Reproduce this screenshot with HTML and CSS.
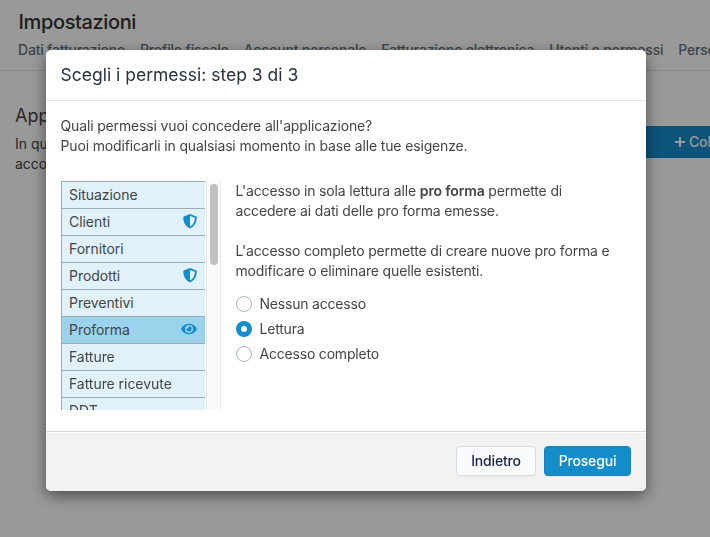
FILE: index.html
```html
<!DOCTYPE html>
<html lang="it">
<head>
<meta charset="utf-8">
<title>Impostazioni</title>
<link rel="stylesheet" href="styles.css">
</head>
<body>
<div class="page">
  <header class="page-header">
    <h1>Impostazioni</h1>
    <nav class="tabs"><a>Dati fatturazione</a><a>Profilo fiscale</a><a>Account personale</a><a>Fatturazione elettronica</a><a>Utenti e permessi</a><a>Perso</a></nav>
  </header>
  <main class="content">
    <section class="intro">
      <h2>Applicazioni collegate</h2>
      <p>In questa pagina<br>account</p>
    </section>
    <button class="connect"><svg viewBox="0 0 10 10" width="10" height="10"><path d="M5 0v10M0 5h10"/></svg>Col</button>
  </main>
</div>
<div class="backdrop">
  <div class="modal" role="dialog">
    <div class="modal-header">Scegli i permessi: step 3 di 3</div>
    <div class="modal-body">
      <p class="lead">Quali permessi vuoi concedere all'applicazione?<br>Puoi modificarli in qualsiasi momento in base alle tue esigenze.</p>
      <div class="columns">
        <div class="scroller">
          <ul class="list">
            <li>Situazione</li>
            <li>Clienti <svg class="shield" viewBox="0 0 14 15"><path class="fill" d="M7 0 1.2 2.2Q.3 2.6.3 3.6C.3 8.800 2.700 12.800 7 14.400 11.300 12.800 13.700 8.800 13.700 3.600Q13.700 2.600 12.800 2.200Z"/><path class="cut" d="M7 1.900 11.900 3.800C11.800 7.900 10.300 11 7 12.500Z"/></svg></li>
            <li>Fornitori</li>
            <li>Prodotti <svg class="shield" viewBox="0 0 14 15"><path class="fill" d="M7 0 1.2 2.2Q.3 2.6.3 3.6C.3 8.800 2.700 12.800 7 14.400 11.300 12.800 13.700 8.800 13.700 3.600Q13.700 2.600 12.800 2.200Z"/><path class="cut" d="M7 1.900 11.900 3.800C11.800 7.900 10.300 11 7 12.500Z"/></svg></li>
            <li>Preventivi</li>
            <li class="active">Proforma <svg class="eye" viewBox="0 0 576 512"><path class="fill" d="M572.52 241.400C518.290 135.590 410.930 64 288 64S57.680 135.640 3.480 241.410a32.350 32.350 0 0 0 0 29.190C57.710 376.410 165.070 448 288 448s230.320-71.640 284.520-177.410a32.350 32.350 0 0 0 0-29.190zM288 400a144 144 0 1 1 144-144 143.930 143.930 0 0 1-144 144zm0-240a95.310 95.310 0 0 0-25.310 3.790 47.850 47.850 0 0 1-66.900 66.900A95.780 95.780 0 1 0 288 160z"/></svg></li>
            <li>Fatture</li>
            <li>Fatture ricevute</li>
            <li>DDT</li>
          </ul>
          <div class="track"><div class="thumb"></div></div>
        </div>
        <div class="details">
          <p>L'accesso in sola lettura alle <b>pro forma</b> permette di<br>accedere ai dati delle pro forma emesse.</p>
          <p>L'accesso completo permette di creare nuove pro forma e<br>modificare o eliminare quelle esistenti.</p>
          <div class="options">
            <label><span class="radio"></span>Nessun accesso</label>
            <label><span class="radio checked"></span>Lettura</label>
            <label><span class="radio"></span>Accesso completo</label>
          </div>
        </div>
      </div>
    </div>
    <div class="modal-footer">
      <button class="btn">Indietro</button>
      <button class="btn primary">Prosegui</button>
    </div>
  </div>
</div>
</body>
</html>
```
FILE: styles.css
```css
* { box-sizing: border-box; }
html, body { height: 100%; overflow: hidden; }
body { margin: 0; background: #fff; color: #444; font: 14px/20px Inter, sans-serif; }
h1, h2, p, ul { margin: 0; padding: 0; }
button { font: inherit; }

.page { height: 537px; overflow: hidden; }
.page-header { height: 71px; padding: 10px 0 0 18px; border-bottom: 1px solid #e4e4e4; }
h1 { padding-left: 0.500px; font-size: 20px; line-height: 24px; font-weight: 500; letter-spacing: -0.38px; color: #333; }
.tabs { display: flex; gap: 15px; margin-top: 6px; overflow: hidden; font-weight: 500; letter-spacing: -0.2px; color: #65747b; white-space: nowrap; }
.content { display: flex; justify-content: space-between; padding: 34px 0 0 15px; }
h2 { font-size: 18px; line-height: 22px; font-weight: 400; margin-bottom: 7px; }
.connect { display: flex; align-items: center; gap: 4px; width: 85px; height: 32px; margin-top: 21px; padding: 0 0 0 50px; border: 0; background: #168dcb; color: #fff; font-weight: 500; letter-spacing: -0.15px; }
.connect svg { stroke: #fff; stroke-width: 2; flex: none; }

.backdrop { position: fixed; inset: 0; padding: 50px 46px; background: rgba(0, 0, 0, .4); }
.modal { display: flex; flex-direction: column; width: 600px; height: 441px; overflow: hidden; background: #fff; border-radius: 5px; box-shadow: 0 5px 15px rgba(0, 0, 0, .5); }
.modal-header { height: 51px; padding: 13px 14.500px; border-bottom: 1px solid #e5e5e5; font-size: 17.500px; line-height: 24px; color: #273142; }
.modal-body { flex: 1; padding: 15px 15px 0 14.500px; letter-spacing: -0.15px; }
.columns { display: flex; gap: 15px; margin-top: 25px; }
.scroller { display: flex; width: 160px; height: 229px; overflow: hidden; }
.list { list-style: none; width: 144.500px; margin-right: 1px; border-left: 1px solid #9eabb2; letter-spacing: -0.05px; }
.list li { display: flex; align-items: center; justify-content: space-between; height: 27px; padding: 0 8px 1px 7.500px; border-top: 1px solid #9eabb2; background: #e0f1fa; }
.list .active { background: #9bd3ed; }
.fill { fill: #168dcb; }
.cut { fill: #e0f1fa; }
.shield { width: 14px; height: 15px; margin-top: -1px; }
.eye { width: 16px; height: 14px; margin-top: -1px; }
.track { width: 15px; padding: 3px 3px; background: #fafafa; border: solid #e8e8e8; border-width: 0 1px; }
.thumb { width: 8px; height: 81px; border-radius: 4px; background: #c1c1c1; }
.details p + p { margin-top: 20px; }
b { font-weight: 600; }
.options { margin-top: 10px; letter-spacing: -0.2px; }
.options label { display: flex; align-items: center; gap: 8px; height: 25px; }
.radio { width: 16px; height: 16px; border: 1px solid #a7b1b7; border-radius: 50%; background: #fff; }
.radio.checked { border: 5px solid #168dcb; }
.modal-footer { display: flex; justify-content: flex-end; gap: 8px; height: 60px; padding: 14px 15px 0; border-top: 1px solid #d8d8d8; background: #f2f2f2; box-shadow: inset 0 1px #fff; }
.btn { width: 80px; height: 30px; padding: 0; border: 1px solid #d8dce0; border-radius: 4px; background: #f9fafc; color: #172440; font-weight: 500; letter-spacing: -0.18px; box-shadow: 0 1px 1px rgba(0, 0, 0, .04); }
.btn.primary { width: 87px; background: #168dcb; border-color: #1582bb; color: #fff; }
```
